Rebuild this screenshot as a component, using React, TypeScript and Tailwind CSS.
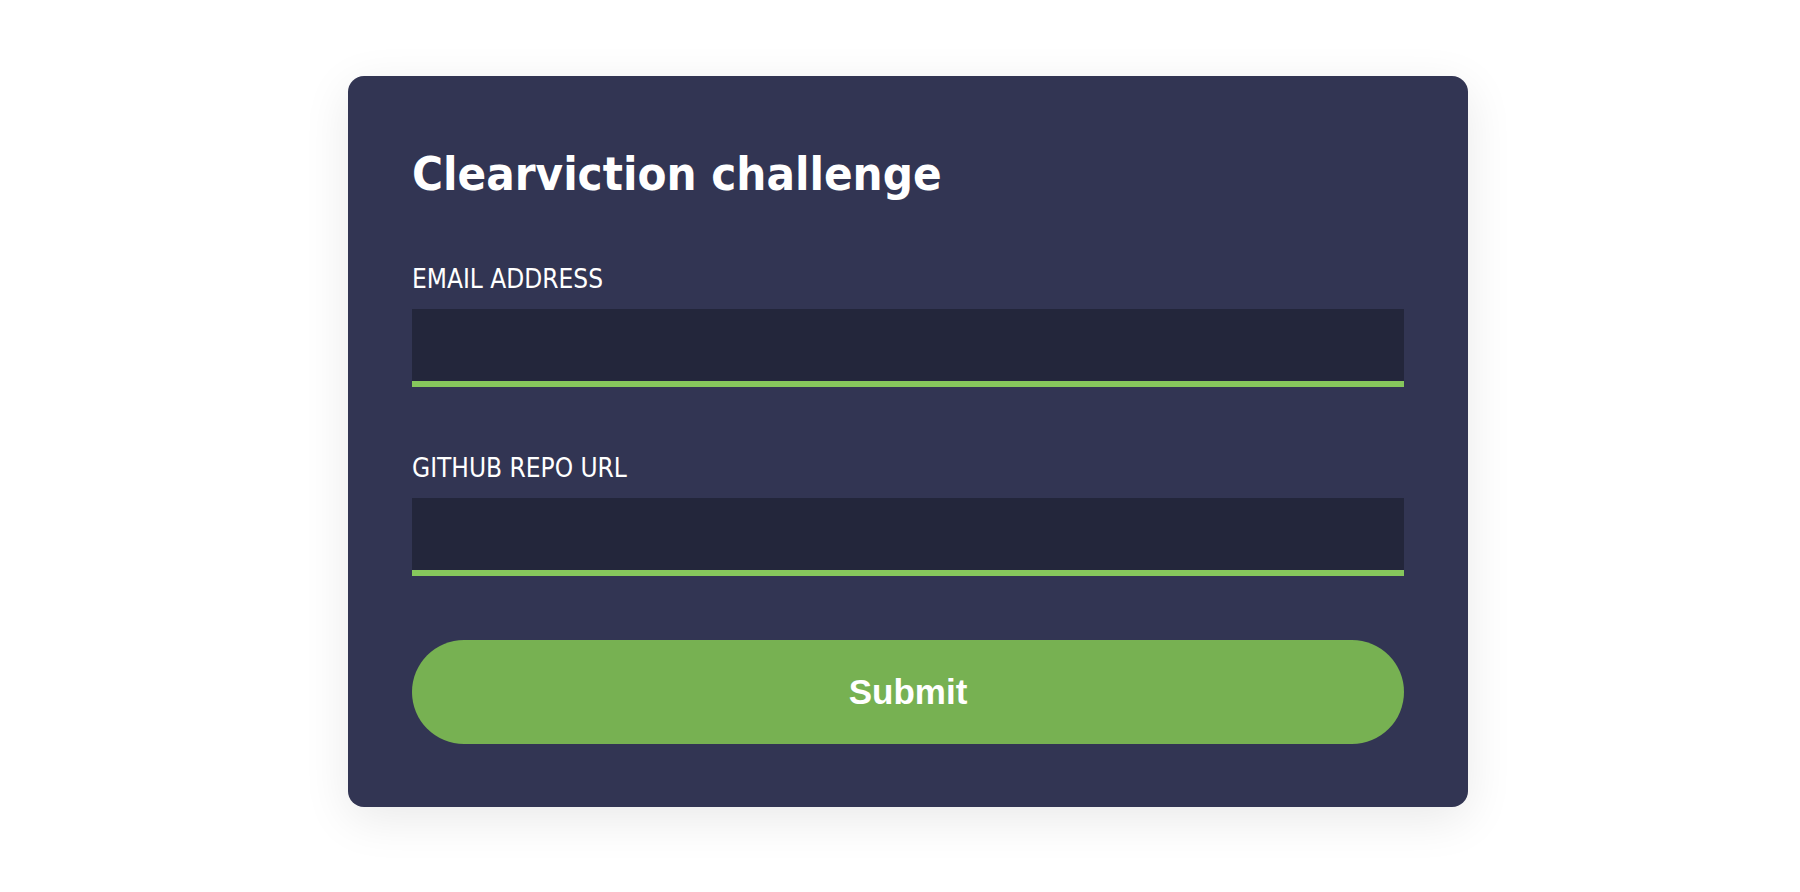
import React, { useState } from 'react';

// Challenge submission form card
export default function App() {
  const [email, setEmail] = useState("");
  const [repo, setRepo] = useState("");

  return (
    <div className="min-h-screen bg-white flex items-start justify-center pt-[76px] pl-4 font-['DejaVu_Sans',Verdana,sans-serif]">
      <div className="w-[1120px] bg-[#323553] rounded-2xl px-16 pt-[74px] pb-[63px] shadow-[0_12px_48px_rgba(0,0,0,0.09)]">
        <h1 className="text-[47px] leading-[47px] font-bold text-white font-stretch-condensed">
          Clearviction challenge
        </h1>

        <form className="mt-[69px]" onSubmit={(e) => e.preventDefault()}>
          <label className="block text-[26px] leading-[26px] text-white font-stretch-condensed mb-[17px]">
            EMAIL ADDRESS
          </label>
          <input
            type="email"
            value={email}
            onChange={(e) => setEmail(e.target.value)}
            className="block w-full h-[78px] bg-[#23263b] border-b-[6px] border-[#86c75c] text-white text-xl px-4 outline-none"
          />

          <label className="block mt-[68px] text-[26px] leading-[26px] text-white font-stretch-condensed mb-[17px]">
            GITHUB REPO URL
          </label>
          <input
            type="text"
            value={repo}
            onChange={(e) => setRepo(e.target.value)}
            className="block w-full h-[78px] bg-[#23263b] border-b-[6px] border-[#86c75c] text-white text-xl px-4 outline-none"
          />

          <button
            type="submit"
            className="block mt-16 w-full h-[104px] rounded-full bg-[#77b152] text-white text-[35px] font-bold font-['Liberation_Sans',Arial,sans-serif]"
          >
            Submit
          </button>
        </form>
      </div>
    </div>
  );
}
